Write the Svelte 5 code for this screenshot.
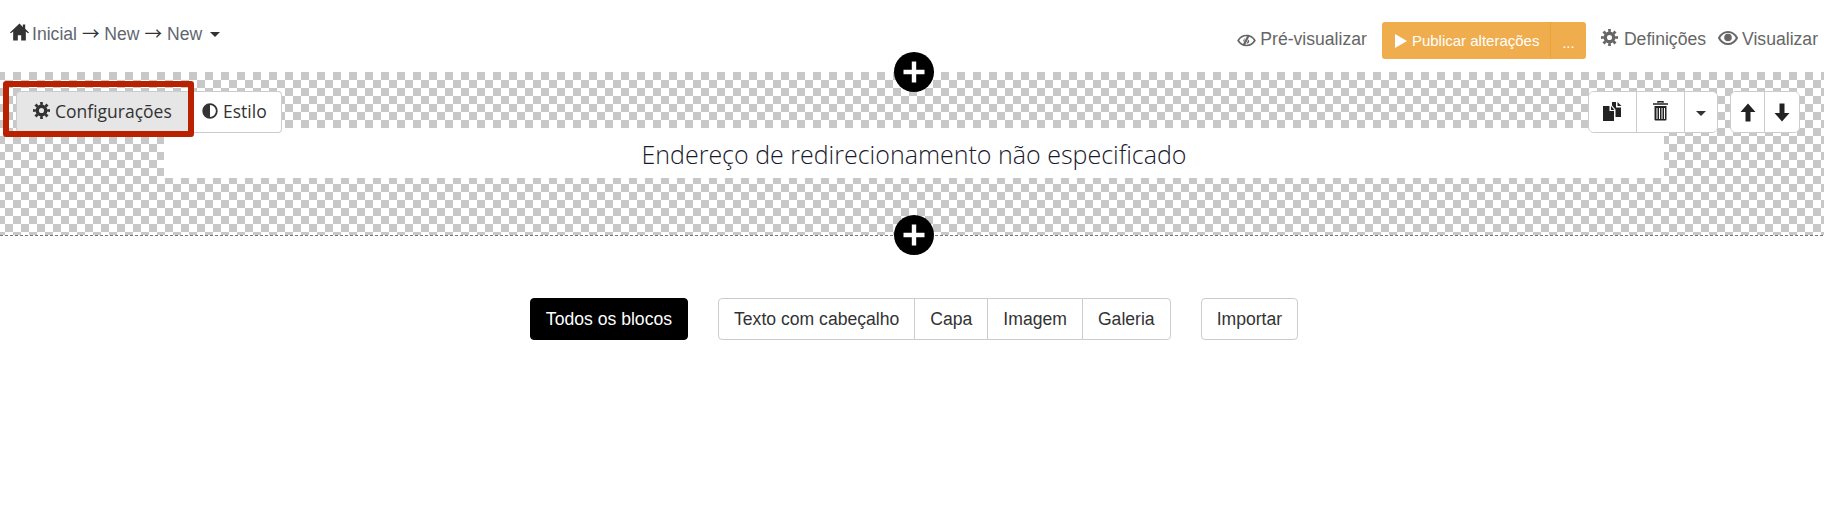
<script>
  const blockTypes = ['Texto com cabeçalho', 'Capa', 'Imagem', 'Galeria'];
</script>

{#snippet cog(cls)}
  <svg class={cls} viewBox="0 0 16 16" aria-hidden="true">
    <circle cx="8" cy="8" r="6.6" fill="none" stroke="currentColor" stroke-width="2.800" pathLength="40" stroke-dasharray="2.500 2.500" stroke-dashoffset="1.250" />
    <circle cx="8" cy="8" r="4" fill="none" stroke="currentColor" stroke-width="3.200" />
  </svg>
{/snippet}

{#snippet plus()}
  <button class="plus" aria-label="Adicionar bloco">
    <svg viewBox="0 0 40 40" aria-hidden="true">
      <path d="M17.800 9.500h4.400v8.300h8.300v4.400h-8.300v8.300h-4.400v-8.300H9.500v-4.400h8.300z" fill="#fff" />
    </svg>
  </button>
{/snippet}

<div class="page">
  <header class="topbar">
    <div class="crumbs">
      <svg class="home" viewBox="0 0 18 16" aria-hidden="true">
        <path d="M9 0 0 8.400l.9.9L3 7.600V16h4.400v-5h3.200v5H15V7.600l2.100 1.700.9-.9-3.600-3.400V1h-2.200v2.200z" fill="currentColor" />
      </svg>
      <span>Inicial <span class="arrow-char">→</span> New <span class="arrow-char">→</span> New</span>
      <span class="caret"></span>
    </div>
    <nav class="actions">
      <a class="link preview">
        <svg class="ico-eye" viewBox="0 0 20 14" aria-hidden="true">
          <path d="M1 7c2-3.400 5-5.400 9-5.400S17 3.600 19 7c-2 3.400-5 5.400-9 5.400S3 10.400 1 7z" fill="none" stroke="currentColor" stroke-width="1.800" />
          <path d="M7 12 12.500 1" stroke="currentColor" stroke-width="2.400" />
          <path d="M8 4 6.500 7l1.200 2.500zM12 6l-2 4.500c2 0 3-1.500 3-3z" fill="currentColor" />
        </svg>
        Pré-visualizar
      </a>
      <div class="publish">
        <button class="publish-main"><span class="play"></span>Publicar alterações</button>
        <button class="publish-more">...</button>
      </div>
      <a class="link settings">{@render cog('ico-cog')}Definições</a>
      <a class="link view">
        <svg class="ico-eye" viewBox="0 0 20 14" aria-hidden="true">
          <path d="M1 7c2-3.800 5-6 9-6s7 2.200 9 6c-2 3.800-5 6-9 6s-7-2.200-9-6z" fill="none" stroke="currentColor" stroke-width="2" />
          <circle cx="10" cy="6.500" r="3.800" fill="currentColor" />
        </svg>
        Visualizar
      </a>
    </nav>
  </header>

  <section class="block">
    {@render plus()}
    <div class="tools tools-left">
      <div class="highlight">
        <button class="tool-btn active">{@render cog('ico-cog dark')}Configurações</button>
      </div>
      <button class="tool-btn style-btn">
        <svg class="ico-adjust" viewBox="0 0 16 16" aria-hidden="true">
          <circle cx="8" cy="8" r="6.800" fill="none" stroke="currentColor" stroke-width="1.800" />
          <path d="M8 1.500a6.500 6.500 0 0 0 0 13z" fill="currentColor" />
        </svg>
        Estilo
      </button>
    </div>

    <div class="tools tools-right">
      <div class="group">
        <button class="icon-btn copy" aria-label="Duplicar">
          <svg viewBox="0 0 19 19" aria-hidden="true">
            <path d="M0 4h6.500v5H11v10H0z" fill="currentColor" />
            <path d="M8 4v4h3.500z" fill="currentColor" />
            <path d="M9 0h4v5.500h5V15h-5.500V7.500L9 3.500z" fill="currentColor" />
            <path d="M14.500 0v4H18.500z" fill="currentColor" />
          </svg>
        </button>
        <button class="icon-btn trash" aria-label="Eliminar">
          <svg viewBox="0 0 16 20" aria-hidden="true">
            <path d="M5.500 1.800V.7h5v1.100M.5 3h15" fill="none" stroke="currentColor" stroke-width="1.500" />
            <path d="M2 5h12v13.500a1 1 0 0 1-1 1H3a1 1 0 0 1-1-1z" fill="currentColor" />
            <path d="M4.500 7v11M7 7v11M9.500 7v11M12 7v11" stroke="#fff" stroke-width="1" />
          </svg>
        </button>
        <button class="icon-btn more" aria-label="Mais"><span class="caret"></span></button>
      </div>
      <div class="group">
        <button class="icon-btn arrow up" aria-label="Mover para cima">
          <svg viewBox="0 0 16 18" aria-hidden="true"><path d="M8 0l7.500 8.500H10.500V18h-5V8.500H.5z" fill="currentColor" /></svg>
        </button>
        <button class="icon-btn arrow down" aria-label="Mover para baixo">
          <svg viewBox="0 0 16 18" aria-hidden="true"><path d="M8 18 .5 9.500h5V0h5v9.500h5z" fill="currentColor" /></svg>
        </button>
      </div>
    </div>

    <div class="band">Endereço de redirecionamento não especificado</div>
    {@render plus()}
  </section>

  <div class="picker">
    <button class="pick all">Todos os blocos</button>
    <div class="pick-group">
      {#each blockTypes as type}
        <button class="pick">{type}</button>
      {/each}
    </div>
    <button class="pick">Importar</button>
  </div>
</div>

<style>
  :global(body) {
    overflow: hidden;
    background: #fff;
  }

  button {
    font: inherit;
    color: inherit;
    cursor: pointer;
  }

  .page {
    width: 1828px;
    height: 510px;
    font-family: 'Liberation Sans', Arial, sans-serif;
    font-size: 17.600px;
    color: #333;
    background: #fff;
  }

  .topbar {
    height: 72px;
    display: flex;
    justify-content: space-between;
    box-sizing: border-box;
    padding: 22px 10px 0 10px;
  }

  .crumbs {
    display: flex;
    align-items: center;
    height: 24px;
    color: #5f6670;
  }

  .arrow-char {
    font-family: 'Noto Sans CJK SC', sans-serif;
    line-height: 0;
    color: #333;
  }

  .home {
    width: 19px;
    height: 18px;
    margin: -5px 3px 0 0;
    color: #333;
  }

  .crumbs .caret {
    margin-left: 8px;
  }

  .caret {
    display: inline-block;
    width: 0;
    height: 0;
    border-top: 5px solid #333;
    border-left: 5px solid transparent;
    border-right: 5px solid transparent;
  }

  .actions {
    display: flex;
    align-items: flex-start;
  }

  .link {
    display: flex;
    align-items: center;
    height: 35px;
    color: #666;
    white-space: nowrap;
  }

  .ico-eye {
    width: 20px;
    height: 14px;
    margin-right: 4px;
    margin-top: -3px;
  }

  .preview .ico-eye {
    margin-top: 1px;
    width: 19px;
    height: 13px;
  }

  :global(.ico-cog) {
    width: 17px;
    height: 17px;
    margin: -5px 6px 0 0;
    flex: none;
  }

  :global(.ico-cog.dark) {
    margin: -1px 5px 0 0;
  }

  .preview {
    margin-right: 15px;
  }

  .publish {
    display: flex;
    height: 37px;
    font-size: 15px;
    color: #fff;
    background: #f0ad4e;
    border-radius: 3px;
    overflow: hidden;
    margin-right: 15px;
  }

  .publish button {
    border: 0;
    background: transparent;
    color: #fff;
    padding: 0;
  }

  .publish-main {
    width: 169px;
    display: flex;
    align-items: center;
    padding-left: 13px !important;
    border-right: 1px solid #eea236 !important;
  }

  .play {
    width: 0;
    height: 0;
    border-left: 12px solid #fff;
    border-top: 7px solid transparent;
    border-bottom: 7px solid transparent;
    margin-right: 5px;
  }

  .publish-more {
    width: 35px;
    line-height: 42px;
    height: 37px;
  }

  .settings {
    margin-right: 12px;
  }

  .block {
    position: relative;
    box-sizing: border-box;
    height: 164px;
    padding-top: 56px;
    border-bottom: 1px dashed #777;
  }

  .block::before {
    content: '';
    position: absolute;
    inset: 0;
    background: repeating-conic-gradient(#c8c8c8 0 25%, #fff 0 50%) 5px 0 / 16px 16px;
    filter: blur(0.7px);
    clip-path: inset(0);
  }

  .band {
    position: relative;
    width: 1500px;
    height: 50px;
    margin-left: 164px;
    background: #fff;
    font-family: 'Open Sans', sans-serif;
    font-weight: 300;
    font-size: 25px;
    line-height: 52px;
    text-align: center;
    color: #1a1a2e;
  }

  .plus {
    position: absolute;
    left: 894px;
    top: -20px;
    width: 40px;
    height: 40px;
    padding: 0;
    border: 0;
    border-radius: 50%;
    background: #000;
    z-index: 2;
  }

  .plus:last-child {
    top: auto;
    bottom: -20px;
  }

  .plus svg {
    display: block;
  }

  .tools {
    position: absolute;
    top: 19px;
    display: flex;
    z-index: 1;
  }

  .tools-left {
    left: 16px;
  }

  .tools-right {
    left: 1588px;
    gap: 12px;
  }

  .tool-btn {
    height: 42px;
    display: flex;
    align-items: center;
    background: #fff;
    border: 1px solid #ccc;
    font-family: 'Open Sans', sans-serif;
    font-size: 17.500px;
    color: #333;
    white-space: nowrap;
    padding: 0 0 3px;
  }

  .highlight {
    position: relative;
  }

  .highlight::after {
    content: '';
    position: absolute;
    left: -13px;
    top: -10px;
    width: 191px;
    height: 56px;
    box-sizing: border-box;
    border: 6px solid #b92100;
    border-radius: 3px;
    pointer-events: none;
  }

  .active {
    width: 174px;
    padding-left: 16px;
    box-sizing: border-box;
    background: #e6e6e6;
    border-radius: 4px 0 0 4px;
  }

  .style-btn {
    width: 92px;
    box-sizing: border-box;
    padding-left: 12px;
    border-left: 0;
    border-radius: 0 4px 4px 0;
  }

  .ico-adjust {
    width: 16px;
    height: 16px;
    margin-right: 5px;
  }

  .group {
    display: flex;
    height: 42px;
    background: #fff;
    border-radius: 6px;
    border: 1px solid #ccc;
    box-sizing: border-box;
    overflow: hidden;
  }

  .icon-btn {
    height: 100%;
    padding: 0;
    background: #fff;
    border: 0;
    border-right: 1px solid #ccc;
    display: flex;
    align-items: center;
    justify-content: center;
    color: #222;
  }

  .icon-btn:last-child {
    border-right: 0;
  }

  .copy {
    width: 48px;
  }

  .copy svg {
    width: 19px;
    height: 19px;
    margin-top: -1px;
  }

  .trash {
    width: 48px;
  }

  .trash svg {
    width: 17px;
    height: 20px;
    margin-top: -3px;
  }

  .more {
    width: 32px;
    padding-top: 2px;
  }

  .arrow {
    width: 34px;
  }

  .arrow svg {
    width: 16px;
    height: 19px;
  }

  .picker {
    display: flex;
    justify-content: center;
    gap: 30px;
    margin-top: 62px;
  }

  .pick {
    height: 42px;
    padding: 0 15px;
    background: #fff;
    border: 1px solid #ccc;
    border-radius: 4px;
    color: #333;
    white-space: nowrap;
  }

  .all {
    background: #000;
    border-color: #000;
    color: #fff;
  }

  .pick-group {
    display: flex;
  }

  .pick-group .pick {
    border-radius: 0;
    margin-left: -1px;
  }

  .pick-group .pick:first-child {
    border-radius: 4px 0 0 4px;
    margin-left: 0;
  }

  .pick-group .pick:last-child {
    border-radius: 0 4px 4px 0;
  }
</style>
